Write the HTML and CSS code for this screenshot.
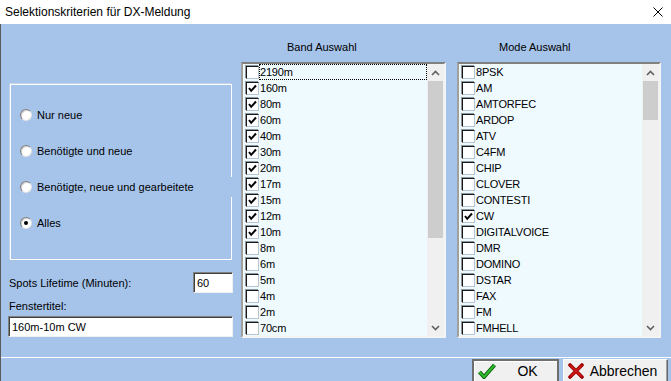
FILE: index.html
```html
<!DOCTYPE html>
<html lang="de">
<head>
<meta charset="UTF-8">
<meta name="viewport" content="width=device-width, initial-scale=1.0">
<title>Selektionskriterien für DX-Meldung</title>
<link rel="stylesheet" href="styles.css">
</head>
<body>
<div class="window">
  <div class="titlebar">
    <span class="title">Selektionskriterien für DX-Meldung</span>
    <svg class="close" width="10" height="10" viewBox="0 0 10 10">
      <path d="M0.5 0.5 L9.5 9.5 M9.5 0.5 L0.5 9.5" stroke="#000" stroke-width="1" fill="none"/>
    </svg>
  </div>

  <div class="client">
    <div class="main">
      <div class="left">
        <div class="group">
          <div class="radio-row"><span class="radio"></span>Nur neue</div>
          <div class="radio-row"><span class="radio"></span>Benötigte und neue</div>
          <div class="radio-row overlap"><span class="radio"></span>Benötigte, neue und gearbeitete</div>
          <div class="radio-row"><span class="radio checked"></span>Alles</div>
        </div>
        <div class="lifetime-row">
          <span>Spots Lifetime (Minuten):</span>
          <div class="edit small">60</div>
        </div>
        <div class="field-label">Fenstertitel:</div>
        <div class="edit wide">160m-10m CW</div>
      </div>

      <div class="list-col band">
        <div class="col-title">Band Auswahl</div>
        <div class="listbox">
          <div class="items" id="bandItems"></div>
          <div class="scrollbar">
            <div class="arrow"><svg width="9" height="6" viewBox="0 0 9 6"><path d="M1 5 L4.5 1.5 L8 5" stroke="#606060" stroke-width="1.6" fill="none"/></svg></div>
            <div class="track"><div class="thumb" style="height: 157px"></div></div>
            <div class="arrow"><svg width="9" height="6" viewBox="0 0 9 6"><path d="M1 1 L4.5 4.5 L8 1" stroke="#606060" stroke-width="1.6" fill="none"/></svg></div>
          </div>
        </div>
      </div>

      <div class="list-col mode">
        <div class="col-title">Mode Auswahl</div>
        <div class="listbox">
          <div class="items" id="modeItems"></div>
          <div class="scrollbar">
            <div class="arrow"><svg width="9" height="6" viewBox="0 0 9 6"><path d="M1 5 L4.5 1.5 L8 5" stroke="#606060" stroke-width="1.6" fill="none"/></svg></div>
            <div class="track"><div class="thumb" style="height: 39px"></div></div>
            <div class="arrow"><svg width="9" height="6" viewBox="0 0 9 6"><path d="M1 1 L4.5 4.5 L8 1" stroke="#606060" stroke-width="1.6" fill="none"/></svg></div>
          </div>
        </div>
      </div>
    </div>

    <div class="footer">
      <button class="btn default">
        <svg class="btn-icon" width="18" height="16" viewBox="0 0 18 16">
          <path d="M1.5 9 L6 14 L16.5 2" stroke="#0a5a0a" stroke-width="4" fill="none" stroke-linejoin="round"/>
          <path d="M1.5 9 L6 14 L16.5 2" stroke="#2eb82e" stroke-width="2.2" fill="none" stroke-linejoin="round"/>
        </svg>
        <span class="btn-text">OK</span>
      </button>
      <button class="btn">
        <svg class="btn-icon" width="16" height="16" viewBox="0 0 16 16">
          <path d="M2 2 L14 14 M14 2 L2 14" stroke="#a00000" stroke-width="3.6" fill="none" stroke-linecap="round"/>
          <path d="M2.5 2.5 L13.5 13.5 M13.5 2.5 L2.5 13.5" stroke="#d41e1e" stroke-width="1.4" fill="none"/>
        </svg>
        <span class="btn-text">Abbrechen</span>
      </button>
    </div>
  </div>
</div>

<script>
  const tick = '<svg width="11" height="11" viewBox="0 0 11 11"><path d="M2 5 L4.2 7.8 L9 2.5" stroke="#000" stroke-width="2" fill="none"/></svg>';

  const bands = [
    ['2190m', false], ['160m', true], ['80m', true], ['60m', true], ['40m', true],
    ['30m', true], ['20m', true], ['17m', true], ['15m', true], ['12m', true],
    ['10m', true], ['8m', false], ['6m', false], ['5m', false], ['4m', false],
    ['2m', false], ['70cm', false]
  ];
  const modes = [
    ['8PSK', false], ['AM', false], ['AMTORFEC', false], ['ARDOP', false], ['ATV', false],
    ['C4FM', false], ['CHIP', false], ['CLOVER', false], ['CONTESTI', false], ['CW', true],
    ['DIGITALVOICE', false], ['DMR', false], ['DOMINO', false], ['DSTAR', false], ['FAX', false],
    ['FM', false], ['FMHELL', false]
  ];

  function fillList(id, entries, focusFirst) {
    const list = document.getElementById(id);
    entries.forEach(([name, checked], i) => {
      const row = document.createElement('div');
      row.className = 'item';
      const focus = focusFirst && i === 0 ? ' focus' : '';
      row.innerHTML = `<span class="check">${checked ? tick : ''}</span><span class="text${focus}">${name}</span>`;
      list.appendChild(row);
    });
  }

  fillList('bandItems', bands, true);
  fillList('modeItems', modes, false);
</script>
</body>
</html>
```

FILE: styles.css
```css
* {
  box-sizing: border-box;
}

body {
  margin: 0;
  font-family: "Liberation Sans", Arial, sans-serif;
  font-size: 11px;
  color: #000;
  background-color: #a6c4ea;
}

.window {
  width: 671px;
  height: 381px;
  overflow: hidden;
}

.titlebar {
  height: 24px;
  background-color: #fff;
  display: flex;
  align-items: center;
  justify-content: space-between;
  padding: 0 8px 0 5px;
  font-size: 12px;
}

.close {
  display: block;
}

.client {
  height: 357px;
  background-color: #a6c4ea;
  border-left: 1px solid #5a5a5a;
}

.main {
  display: flex;
  height: 333px;
  padding-left: 7px;
}

/* left column */

.left {
  width: 225px;
  padding-top: 60px;
}

.group {
  margin-left: 2px;
  width: 222px;
  height: 176px;
  border: 1px solid #fff;
  box-shadow: -1px -1px 0 #c4d4ea;
  padding: 22px 0 0 9px;
}

.radio-row {
  display: flex;
  align-items: center;
  height: 16px;
  margin-bottom: 20px;
}

/* this control is wider than the box and hides part of its border */
.radio-row.overlap {
  height: 20px;
  margin: -2px -1px 18px 0;
  background-color: #a6c4ea;
}

.radio {
  width: 12px;
  height: 12px;
  border-radius: 50%;
  margin-right: 5px;
  background-color: #fff;
  border: 1px solid;
  border-color: #808080 #e0e0e0 #e0e0e0 #808080;
  box-shadow: inset 1px 1px 0 #d0d0d0;
  position: relative;
}

.radio.checked::after {
  content: "";
  position: absolute;
  left: 3px;
  top: 3px;
  width: 4px;
  height: 4px;
  border-radius: 50%;
  background-color: #000;
}

.lifetime-row {
  display: flex;
  justify-content: space-between;
  align-items: center;
  margin-top: 12px;
  padding-left: 1px;
}

.edit {
  height: 21px;
  background-color: #fff;
  border-top: 1px solid #808080;
  border-left: 1px solid #808080;
  border-right: 1px solid #f0f0f0;
  border-bottom: 1px solid #f0f0f0;
  box-shadow: inset 1px 1px 0 #404040;
  padding: 3px 0 0 3px;
  line-height: 14px;
}

.edit.small {
  width: 40px;
}

.edit.wide {
  width: 225px;
  margin-top: 3px;
}

.field-label {
  margin-top: 6px;
  padding-left: 1px;
  line-height: 14px;
}

/* list columns */

.list-col.band {
  margin-left: 8px;
  width: 205px;
}

.list-col.mode {
  margin-left: 11px;
  width: 204px;
}

.col-title {
  height: 38px;
  padding-top: 16px;
  line-height: 14px;
}

.band .col-title {
  padding-left: 46px;
}

.mode .col-title {
  padding-left: 42px;
}

.listbox {
  height: 276px;
  display: flex;
  background-color: #effaff;
  border-top: 2px solid #808080;
  border-left: 2px solid #a0a0a0;
  border-right: 2px solid #f4f4f4;
  border-bottom: 2px solid #f4f4f4;
  overflow: hidden;
}

.items {
  flex: 1;
}

.item {
  display: flex;
  align-items: center;
  height: 16px;
  padding-left: 3px;
  letter-spacing: -0.2px;
}

.check {
  width: 13px;
  height: 13px;
  flex: none;
  background-color: #fff;
  border: 1px solid #1a1a1a;
  border-right-color: #b8c4d0;
  border-bottom-color: #b8c4d0;
  box-shadow: -1px -1px 0 #8a96a4;
  display: flex;
  align-items: center;
  justify-content: center;
}

.check svg {
  display: block;
}

.text {
  flex: 1;
  height: 16px;
  line-height: 16px;
  padding-left: 1px;
}

.text.focus {
  outline: 1px dotted #000;
  outline-offset: -1px;
}

.scrollbar {
  width: 17px;
  display: flex;
  flex-direction: column;
  background-color: #f0f0f0;
}

.arrow {
  height: 17px;
  display: flex;
  align-items: center;
  justify-content: center;
}

.arrow svg {
  display: block;
}

.track {
  flex: 1;
}

.thumb {
  margin: 0 1px;
  background-color: #cdcdcd;
}

/* footer buttons */

.footer {
  border-top: 1px solid #fff;
  display: flex;
  justify-content: flex-end;
  gap: 4px;
  padding: 1px 3px 0 0;
}

.btn {
  display: flex;
  align-items: center;
  height: 26px;
  padding: 0 0 3px 4px;
  font-family: "Liberation Sans", Arial, sans-serif;
  font-size: 14px;
  color: #000;
  background-color: #f0f0f0;
  border: 1px solid;
  border-color: #fff #696969 #696969 #fff;
  box-shadow: inset -1px -1px 0 #a0a0a0;
  width: 105px;
}

.btn.default {
  width: 87px;
  border: 2px solid #6e6e6e;
  box-shadow: inset 1px 1px 0 #fff;
}

.btn-icon {
  display: block;
  flex: none;
}

.btn-text {
  flex: 1;
  text-align: center;
  padding-right: 4px;
}

.btn.default .btn-text {
  padding-left: 6px;
}
```
